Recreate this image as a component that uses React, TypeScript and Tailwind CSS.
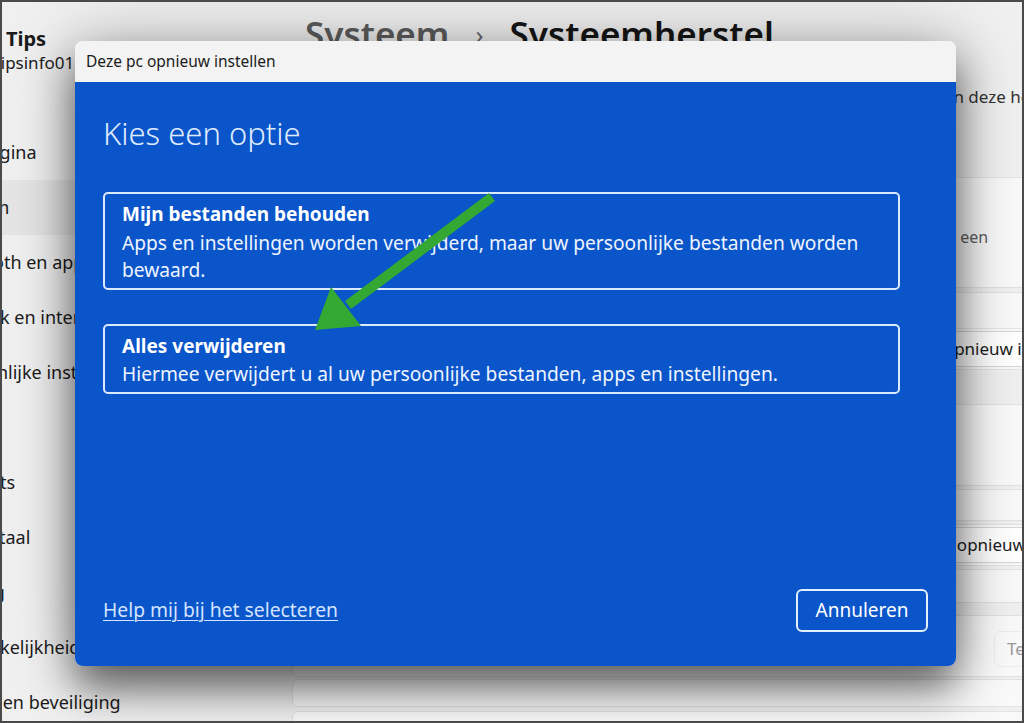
import { ReactNode } from 'react'

const navItems = [
  'Startpagina',
  'Systeem',
  'Bluetooth en apparaten',
  'Netwerk en internet',
  'Persoonlijke instellingen',
  'Apps',
  'Accounts',
  'Tijd en taal',
  'Gaming',
  'Toegankelijkheid',
  'Privacy en beveiliging',
]

function Sidebar() {
  return (
    <aside className="w-[288px] shrink-0 flex flex-col pt-[25px] text-[#1b1b1b]">
      <div className="-ml-[24px] text-[20px] font-bold leading-[24px] whitespace-nowrap">Pc Tips</div>
      <div className="-ml-[26px] mt-[2px] text-[17px] leading-[20px] whitespace-nowrap">
        pctipsinfo01@gmail.com
      </div>
      <nav className="mt-[52px] flex flex-col">
        {navItems.map((item) => (
          <div
            key={item}
            className={
              'h-[55px] flex items-center pr-2 ' +
              (item === 'Systeem' ? 'bg-[#e5e5e5] rounded-r-md' : '')
            }
          >
            <span className="-ml-[64px] text-[18px] whitespace-nowrap">{item}</span>
          </div>
        ))}
      </nav>
    </aside>
  )
}

function Card({
  h,
  children,
  mt = 'mt-[3px]',
  align = 'items-center',
}: {
  h: string
  children: ReactNode
  mt?: string
  align?: string
}) {
  return (
    <div
      className={`${h} ${mt} flex ${align} bg-[#f9f9f9] border border-[#e2e2e2] rounded-md pl-4 text-[#1b1b1b]`}
    >
      {children}
    </div>
  )
}

function SmallButton({ children, muted }: { children: ReactNode; muted?: boolean }) {
  return (
    <div
      className={
        'shrink-0 whitespace-nowrap rounded-md border px-3 py-[4px] text-[17px] ' +
        (muted ? 'border-[#ededed] text-[#9a9a9a]' : 'border-[#d6d6d6] bg-white text-[#1b1b1b]')
      }
    >
      {children}
    </div>
  )
}

function Main() {
  return (
    <main className="w-[960px] shrink-0 flex flex-col pl-[2px]">
      <h1 className="pl-[13px] mt-[9px] h-[46px] flex items-center gap-[26px] text-[35px] font-semibold whitespace-nowrap">
        <span className="text-[#5c5c5c]">Systeem</span>
        <span className="text-[#6a6a6a] text-[26px] font-normal">›</span>
        <span className="text-[#161616]">Systeemherstel</span>
      </h1>
      <p className="pl-[24px] mt-[28px] text-[17px] leading-[24px] text-[#333] whitespace-nowrap">
        Als uw pc niet goed werkt of als u deze opnieuw wilt instellen, probeert u een van deze herstelopties.
      </p>
      <div className="mt-[68px] flex flex-col">
        <Card h="h-[111px]" mt="mt-0" align="items-start">
          <div className="flex flex-col pt-[26px] pl-[8px]">
            <span className="text-[17px] leading-[22px]">Problemen oplossen zonder uw pc opnieuw in te stellen</span>
            <span className="text-[16px] leading-[22px] text-[#5d5d5d] whitespace-nowrap">
              Het opnieuw instellen kan even duren: probeer eerst een probleem op te lossen door een
              <br />
              probleemoplosser uit te voeren
            </span>
          </div>
        </Card>
        <div className="mt-[4px] bg-[#f9f9f9] border border-[#e2e2e2] rounded-md text-[#1b1b1b]">
          <div className="h-[36px] flex items-center pl-4 border-b border-[#e6e6e6] text-[16px] font-semibold">
            Herstelopties
          </div>
          <div className="h-[40px] flex items-center pl-4">
            <span className="w-[599px] text-[17px]">Deze pc opnieuw instellen</span>
            <SmallButton>Pc opnieuw instellen</SmallButton>
          </div>
        </div>
        <Card h="h-[82px]" mt="mt-[34px]">
          <span className="text-[17px]">Geavanceerd opstarten</span>
        </Card>
        <Card h="h-[32px]">
          <span className="text-[14px] text-[#5d5d5d]">Opties</span>
        </Card>
        <Card h="h-[42px]">
          <span className="w-[607px] text-[17px]">Geavanceerde opstartopties</span>
          <SmallButton>Nu opnieuw opstarten</SmallButton>
        </Card>
        <Card h="h-[34px]">
          <span className="text-[14px] text-[#5d5d5d]">Meer informatie</span>
        </Card>
        <Card h="h-[62px]" mt="mt-[12px]">
          <div className="w-[685px] flex flex-col pl-[34px]">
            <span className="text-[17px] leading-[22px]">Teruggaan</span>
            <span className="text-[13px] leading-[18px] text-[#6b6b6b] whitespace-nowrap">
              Deze optie is niet meer beschikbaar op deze pc
            </span>
          </div>
          <div className="mt-[6px]">
            <SmallButton muted>Teruggaan</SmallButton>
          </div>
        </Card>
        <Card h="h-[28px]" mt="mt-[2px]">
          <span />
        </Card>
        <Card h="h-[40px]" mt="mt-[4px]">
          <span />
        </Card>
      </div>
    </main>
  )
}

function Option({ title, text }: { title: string; text: string }) {
  return (
    <div className="border-2 border-[#dceaff] rounded-[5px] pl-[17px] pr-4 pt-[7px] pb-[4px] text-white">
      <div className="text-[19px] font-bold leading-[27.5px]">{title}</div>
      <div className="text-[19.2px] leading-[27.5px] text-[#eef4ff]">{text}</div>
    </div>
  )
}

function ResetDialog() {
  return (
    <div className="absolute left-[73px] top-[39px] w-[881px] h-[625px] rounded-lg overflow-hidden flex flex-col shadow-[0_22px_40px_rgba(0,0,0,0.55),0_0_70px_rgba(0,0,0,0.25)]">
      <div className="h-[41px] shrink-0 bg-[#f3f3f3] px-[11px] flex items-center text-[15.5px] text-[#1b1b1b]">
        Deze pc opnieuw instellen
      </div>
      <div className="flex-1 bg-[#0a55c9] pl-[28px] pr-[56px] flex flex-col">
        <h2 className="mt-[31px] text-[31px] font-light leading-[40px] text-[#dfeaff]">Kies een optie</h2>
        <div className="mt-[39px] flex flex-col gap-[34px]">
          <Option
            title="Mijn bestanden behouden"
            text="Apps en instellingen worden verwijderd, maar uw persoonlijke bestanden worden bewaard."
          />
          <Option
            title="Alles verwijderen"
            text="Hiermee verwijdert u al uw persoonlijke bestanden, apps en instellingen."
          />
        </div>
        <div className="flex-1" />
        <div className="flex items-center justify-between mr-[-28px] mb-[34px]">
          <a className="text-[19.3px] text-[#d4e4ff] underline underline-offset-[3px] decoration-1">
            Help mij bij het selecteren
          </a>
          <button className="w-[132px] h-[43px] border-2 border-[#e3eeff] rounded-md text-[19px] text-white">
            Annuleren
          </button>
        </div>
      </div>
    </div>
  )
}

function Arrow() {
  return (
    <svg className="absolute -left-[2px] -top-[2px] pointer-events-none" width="1024" height="723">
      <line x1="492" y1="197" x2="348" y2="305" stroke="#33a833" strokeWidth="10" />
      <polygon points="315,330 331,287 361,326" fill="#33a833" />
    </svg>
  )
}

export default function App() {
  return (
    <div className="relative w-[1024px] h-[723px] overflow-hidden border-2 border-[#4a4a4a] bg-[#f0f0f0] font-['Noto_Sans','Open_Sans',sans-serif]">
      <div className="flex h-full">
        <Sidebar />
        <Main />
      </div>
      <ResetDialog />
      <Arrow />
    </div>
  )
}
